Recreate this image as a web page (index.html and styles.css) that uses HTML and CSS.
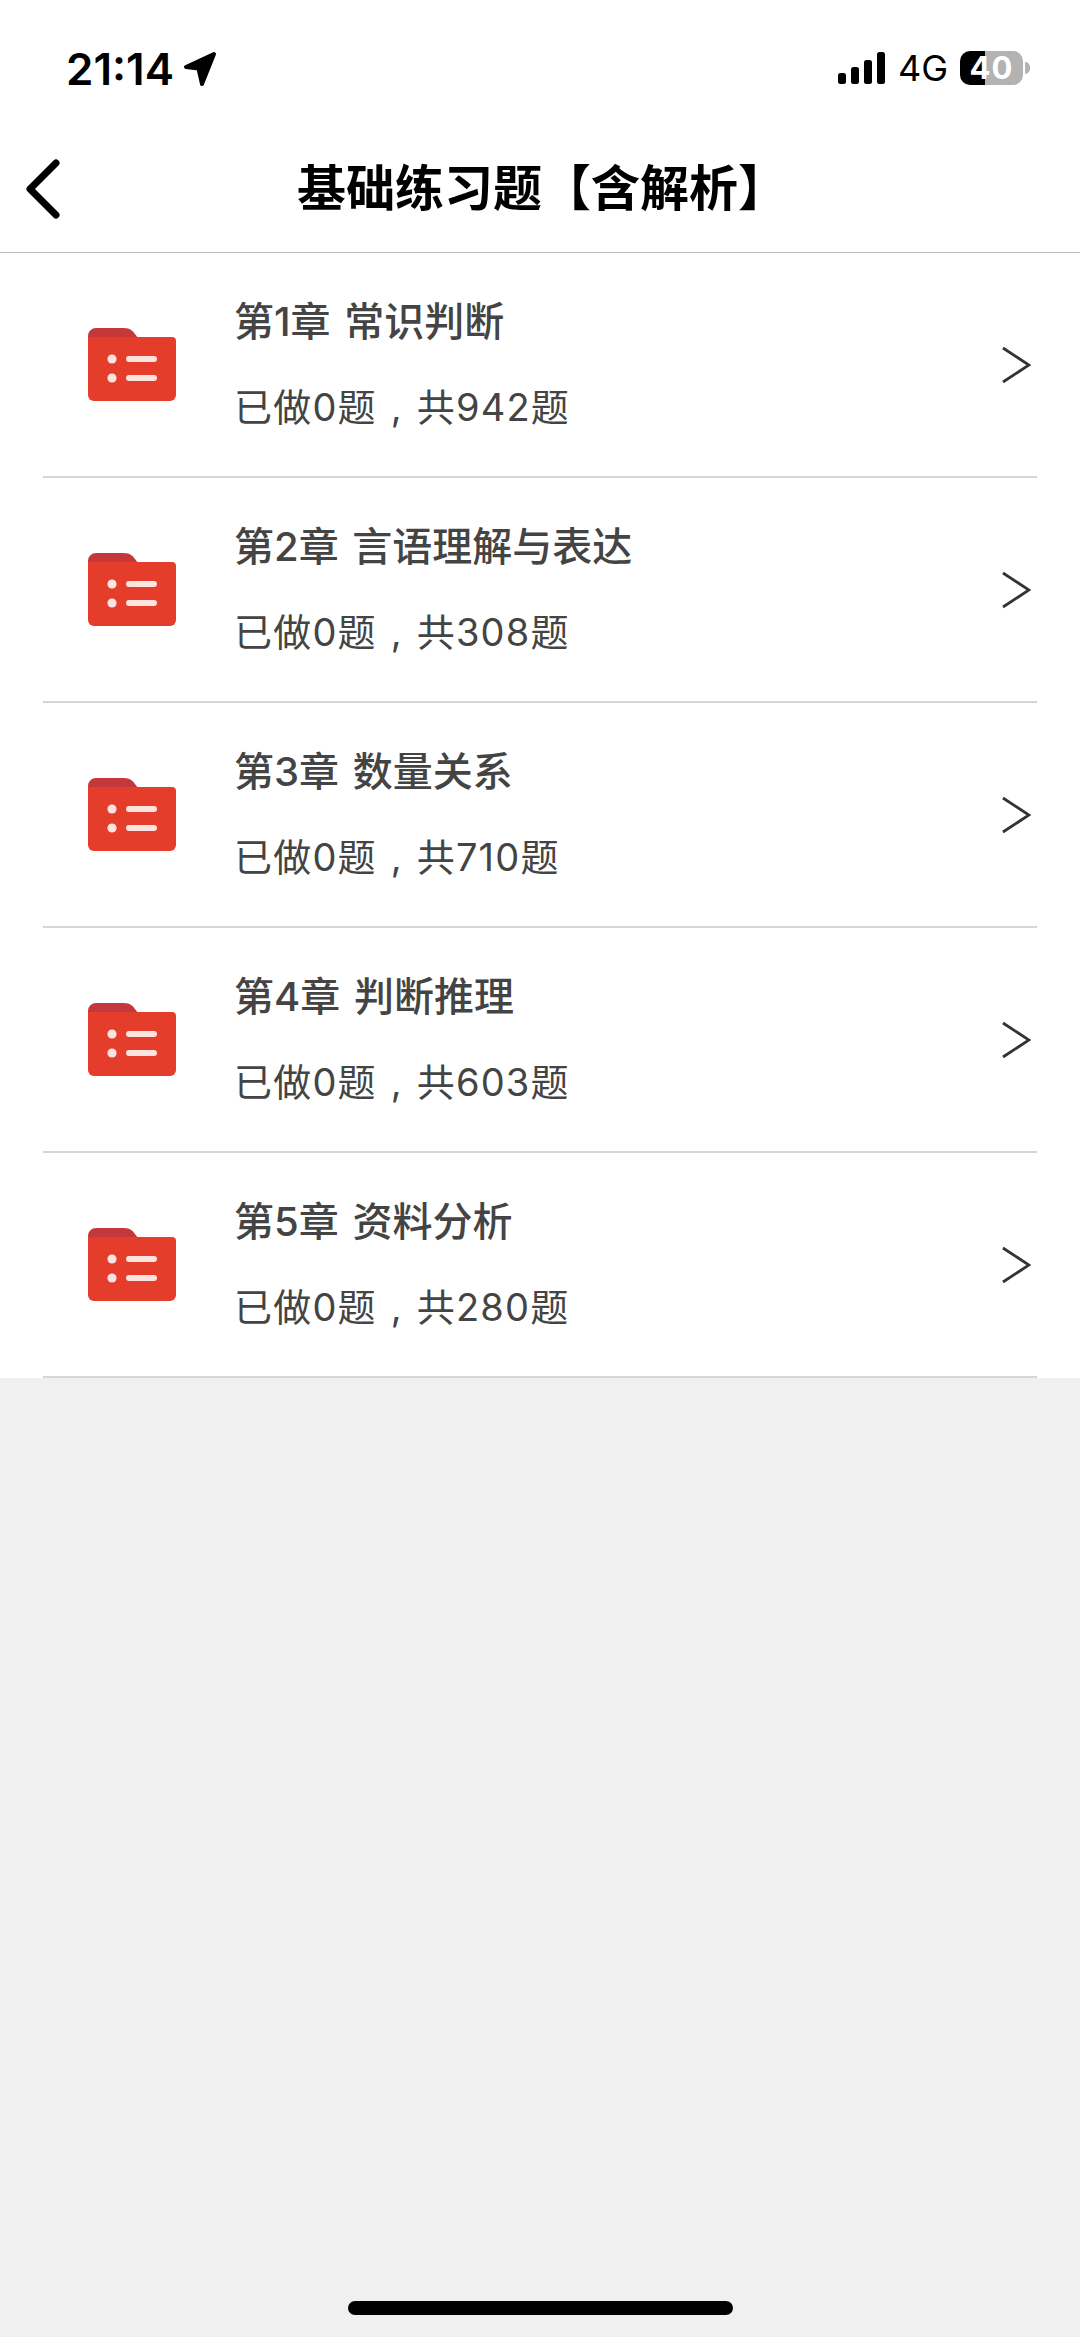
FILE: index.html
```html
<!DOCTYPE html>
<html lang="zh-CN">
<head>
    <meta charset="UTF-8">
    <meta name="viewport" content="width=device-width, initial-scale=1.0">
    <title>基础练习题【含解析】</title>
    <link rel="stylesheet" href="styles.css">
</head>
<body>
    <svg class="defs" width="0" height="0">
        <symbol id="folder" viewBox="0 0 88 75">
            <path d="M0 9a8 8 0 0 1 8-8h28c6 0 9 3 11 6l3 4v3H0z" fill="#c4383c"/>
            <path d="M0 10h84a4 4 0 0 1 4 4v54a6 6 0 0 1-6 6H6a6 6 0 0 1-6-6z" fill="#e43d2b"/>
            <circle cx="24" cy="32" r="4.6" fill="#fbe3df"/>
            <circle cx="24" cy="51" r="4.6" fill="#fbe3df"/>
            <rect x="38" y="29" width="31" height="6" rx="3" fill="#fbe3df"/>
            <rect x="38" y="48" width="31" height="6" rx="3" fill="#fbe3df"/>
        </symbol>
        <symbol id="chevron" viewBox="0 0 30 38">
            <path d="M2 2l26 17L2 36" fill="none" stroke="#333" stroke-width="2.8"/>
        </symbol>
    </svg>

    <div class="status-bar">
        <div class="status-left">
            <span class="time">21:14</span>
            <svg class="location" viewBox="0 0 34 36"><path d="M31 3L3 16l12.500 1.500L19 33z" fill="#000" stroke="#000" stroke-width="4" stroke-linejoin="round"/></svg>
        </div>
        <div class="status-right">
            <svg class="signal" viewBox="0 0 48 32">
                <rect x="0" y="21" width="8" height="11" rx="2.500"/>
                <rect x="13" y="15" width="8" height="17" rx="2.500"/>
                <rect x="26" y="8" width="8" height="24" rx="2.500"/>
                <rect x="39" y="0" width="8" height="32" rx="2.500"/>
            </svg>
            <span class="network">4G</span>
            <div class="battery"><span>40</span></div>
            <div class="battery-cap"></div>
        </div>
    </div>

    <header class="nav">
        <svg class="back" viewBox="0 0 36 60"><path d="M31 4L5 30l26 26" fill="none" stroke="#000" stroke-width="7" stroke-linecap="round" stroke-linejoin="round"/></svg>
        <h1>基础练习题【含解析】</h1>
    </header>

    <ul class="chapter-list">
        <li class="chapter">
            <svg class="folder"><use href="#folder"/></svg>
            <div class="chapter-text">
                <div class="chapter-title">第1章 常识判断</div>
                <div class="chapter-count">已做0题 , 共942题</div>
            </div>
            <svg class="chevron"><use href="#chevron"/></svg>
        </li>
        <li class="chapter">
            <svg class="folder"><use href="#folder"/></svg>
            <div class="chapter-text">
                <div class="chapter-title">第2章 言语理解与表达</div>
                <div class="chapter-count">已做0题 , 共308题</div>
            </div>
            <svg class="chevron"><use href="#chevron"/></svg>
        </li>
        <li class="chapter">
            <svg class="folder"><use href="#folder"/></svg>
            <div class="chapter-text">
                <div class="chapter-title">第3章 数量关系</div>
                <div class="chapter-count">已做0题 , 共710题</div>
            </div>
            <svg class="chevron"><use href="#chevron"/></svg>
        </li>
        <li class="chapter">
            <svg class="folder"><use href="#folder"/></svg>
            <div class="chapter-text">
                <div class="chapter-title">第4章 判断推理</div>
                <div class="chapter-count">已做0题 , 共603题</div>
            </div>
            <svg class="chevron"><use href="#chevron"/></svg>
        </li>
        <li class="chapter">
            <svg class="folder"><use href="#folder"/></svg>
            <div class="chapter-text">
                <div class="chapter-title">第5章 资料分析</div>
                <div class="chapter-count">已做0题 , 共280题</div>
            </div>
            <svg class="chevron"><use href="#chevron"/></svg>
        </li>
    </ul>

    <div class="empty-area">
        <div class="home-bar"></div>
    </div>
</body>
</html>
```

FILE: styles.css
```css
* {
    box-sizing: border-box;
}

html,
body {
    margin: 0;
    padding: 0;
    height: 100%;
}

body {
    width: 1080px;
    height: 2337px;
    display: flex;
    flex-direction: column;
    background: #fff;
    font-family: "Inter", "Noto Sans CJK SC", sans-serif;
    overflow: hidden;
}

.defs {
    display: block;
    height: 0;
}

.status-bar {
    height: 100px;
    flex: none;
    display: flex;
    justify-content: space-between;
    align-items: flex-start;
    padding: 51px 50px 0 66px;
}

.status-left {
    display: flex;
    align-items: center;
    height: 36px;
}

.time {
    font-size: 44px;
    font-weight: 600;
    line-height: 36px;
    color: #000;
}

.location {
    width: 34px;
    height: 36px;
    margin-left: 9px;
}

.status-right {
    display: flex;
    align-items: center;
    height: 34px;
}

.signal {
    width: 48px;
    height: 32px;
}

.network {
    margin-left: 12px;
    font-size: 36px;
    line-height: 34px;
    color: #000;
}

.battery {
    width: 63px;
    height: 34px;
    margin-left: 12px;
    border-radius: 10px;
    background: linear-gradient(90deg, #000 0, #000 25px, #b3b3b3 25px, #b3b3b3 100%);
    color: #fff;
    text-align: center;
    font-size: 31px;
    font-weight: 700;
    line-height: 34px;
    letter-spacing: 1px;
}

.battery-cap {
    width: 5px;
    height: 12px;
    margin-left: 2px;
    border-radius: 0 6px 6px 0;
    background: #b3b3b3;
}

.nav {
    height: 153px;
    flex: none;
    display: flex;
    align-items: center;
    padding: 26px 0 0 25px;
    border-bottom: 1px solid #bdbdbd;
}

.back {
    width: 36px;
    height: 60px;
    flex: none;
}

.nav h1 {
    margin: 0 0 0 236px;
    font-size: 49px;
    font-weight: 700;
    line-height: 60px;
    color: #000;
    white-space: nowrap;
}

.chapter-list {
    margin: 0;
    padding: 0;
    list-style: none;
    flex: none;
}

.chapter {
    height: 225px;
    margin: 0 43px;
    display: flex;
    align-items: center;
    border-bottom: 2px solid #d6d6d6;
}

.folder {
    width: 88px;
    height: 75px;
    margin-left: 45px;
    flex: none;
}

.chapter-text {
    flex: 1;
    margin-left: 58px;
}

.chapter-title {
    font-size: 40px;
    font-weight: 500;
    word-spacing: 3px;
    line-height: 48px;
    color: #444;
}

.chapter-count {
    margin-top: 37px;
    font-size: 38px;
    font-weight: 400;
    letter-spacing: 1.2px;
    word-spacing: 2px;
    line-height: 48px;
    color: #444;
}

.chevron {
    width: 30px;
    height: 38px;
    margin-right: 6px;
    flex: none;
}

.empty-area {
    flex: 1;
    display: flex;
    justify-content: center;
    align-items: flex-end;
    padding-bottom: 22px;
    background: #f0f0f0;
}

.home-bar {
    width: 385px;
    height: 14px;
    border-radius: 7px;
    background: #000;
}
```
